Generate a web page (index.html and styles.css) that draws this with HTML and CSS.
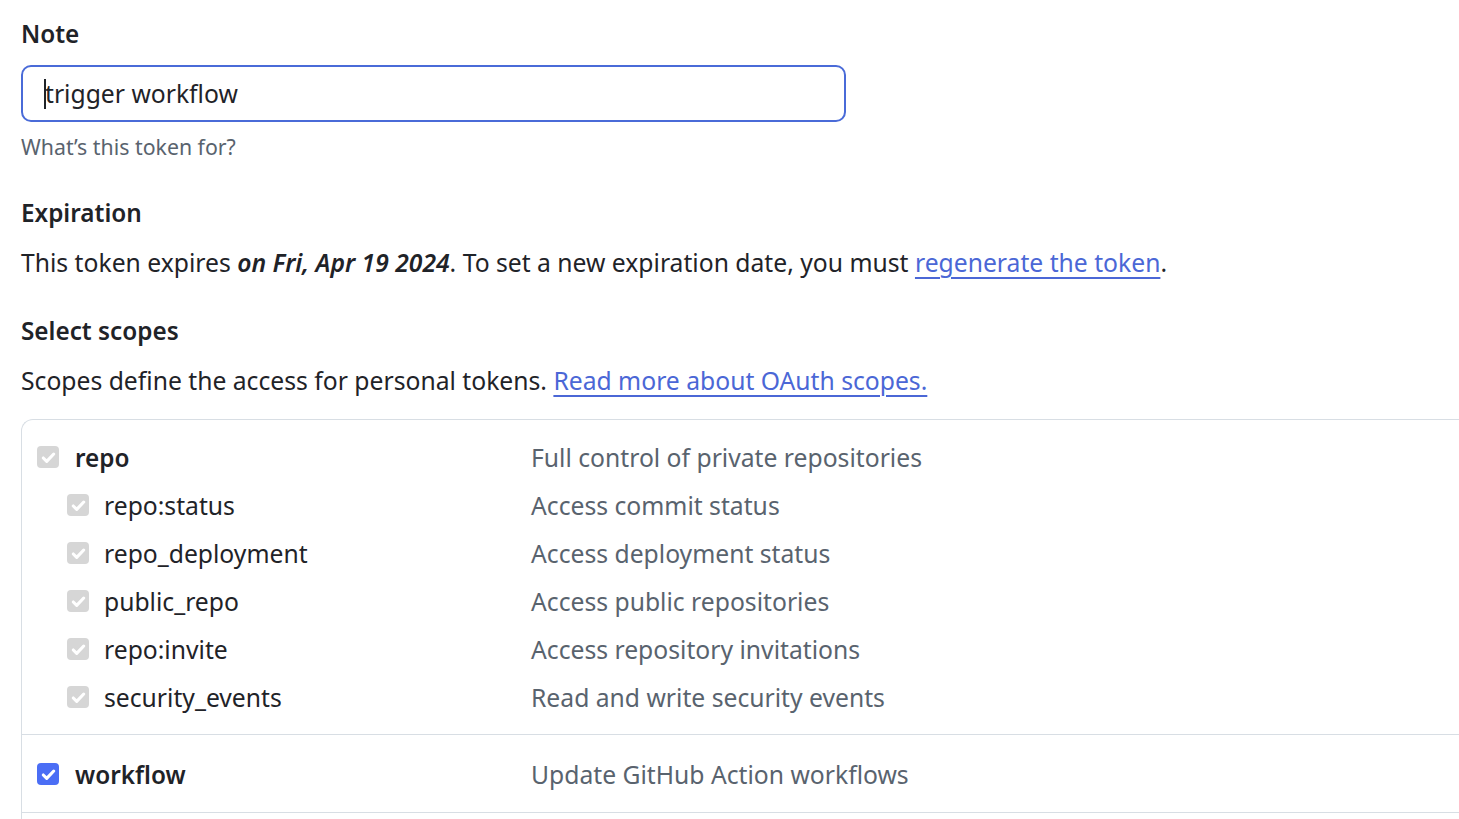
FILE: index.html
```html
<!DOCTYPE html>
<html lang="en">
<head>
<meta charset="utf-8">
<title>New personal access token</title>
<link rel="stylesheet" href="styles.css">
</head>
<body>
<main class="page">
  <label class="label" for="note">Note</label>
  <div class="input-wrap">
    <input class="input" id="note" type="text" value="trigger workflow">
    <span class="caret"></span>
  </div>
  <p class="hint">What’s this token for?</p>

  <h3 class="heading">Expiration</h3>
  <p class="text">This token expires <em class="date">on Fri, Apr 19 2024</em>. To set a new expiration date, you must <a class="link" href="#">regenerate the token</a>.</p>

  <h3 class="heading heading-scopes">Select scopes</h3>
  <p class="text">Scopes define the access for personal tokens. <a class="link" href="#">Read more about OAuth scopes.</a></p>

  <div class="scopes">
    <div class="group">
      <div class="row">
        <div class="name"><span class="cb cb-disabled"><svg viewBox="0 0 16 16"><path d="M3.6 8.4l2.9 2.9 5.9-6.2"/></svg></span><strong class="scope-main">repo</strong></div>
        <div class="desc">Full control of private repositories</div>
      </div>
      <div class="row sub">
        <div class="name"><span class="cb cb-disabled"><svg viewBox="0 0 16 16"><path d="M3.6 8.4l2.9 2.9 5.9-6.2"/></svg></span><span class="scope-sub">repo:status</span></div>
        <div class="desc">Access commit status</div>
      </div>
      <div class="row sub">
        <div class="name"><span class="cb cb-disabled"><svg viewBox="0 0 16 16"><path d="M3.6 8.4l2.9 2.9 5.9-6.2"/></svg></span><span class="scope-sub">repo_deployment</span></div>
        <div class="desc">Access deployment status</div>
      </div>
      <div class="row sub">
        <div class="name"><span class="cb cb-disabled"><svg viewBox="0 0 16 16"><path d="M3.6 8.4l2.9 2.9 5.9-6.2"/></svg></span><span class="scope-sub">public_repo</span></div>
        <div class="desc">Access public repositories</div>
      </div>
      <div class="row sub">
        <div class="name"><span class="cb cb-disabled"><svg viewBox="0 0 16 16"><path d="M3.6 8.4l2.9 2.9 5.9-6.2"/></svg></span><span class="scope-sub">repo:invite</span></div>
        <div class="desc">Access repository invitations</div>
      </div>
      <div class="row sub">
        <div class="name"><span class="cb cb-disabled"><svg viewBox="0 0 16 16"><path d="M3.6 8.4l2.9 2.9 5.9-6.2"/></svg></span><span class="scope-sub">security_events</span></div>
        <div class="desc">Read and write security events</div>
      </div>
    </div>
    <div class="group group-single">
      <div class="row">
        <div class="name"><span class="cb cb-checked"><svg viewBox="0 0 16 16"><path d="M3.6 8.4l2.9 2.9 5.9-6.2"/></svg></span><strong class="scope-main">workflow</strong></div>
        <div class="desc">Update GitHub Action workflows</div>
      </div>
    </div>
    <div class="group"></div>
  </div>
</main>
</body>
</html>
```

FILE: styles.css
```css
html, body {
  margin: 0;
  padding: 0;
  background: #ffffff;
  overflow: hidden;
}

body {
  font-family: "Noto Sans", "Open Sans", "Liberation Sans", sans-serif;
  color: #1f2328;
  font-size: 24.7px;
}

.page {
  padding: 16px 0 0 21px;
}

.label {
  display: block;
  font-weight: 600;
  font-size: 24.3px;
  line-height: 36px;
}

.input-wrap {
  position: relative;
  margin-top: 13px;
  width: 825px;
}

.input {
  box-sizing: border-box;
  width: 825px;
  height: 57px;
  border: 2.5px solid #4a6bd8;
  border-radius: 10px;
  padding: 0 0 0 22px;
  font-family: inherit;
  font-size: 24.7px;
  color: #1f2328;
  outline: none;
  background: #fff;
}

.caret {
  position: absolute;
  left: 23px;
  top: 14px;
  width: 2px;
  height: 30px;
  background: #1f2328;
}

.hint {
  margin: 10px 0 0;
  font-size: 21.3px;
  line-height: 30px;
  color: #59636e;
}

.heading {
  margin: 33px 0 0;
  font-size: 24.3px;
  font-weight: 600;
  line-height: 36px;
}

.heading-scopes {
  margin-top: 32px;
}

.text {
  margin: 14px 0 0;
  line-height: 36px;
}

.date {
  font-weight: 600;
}

.link {
  color: #4b67d6;
  text-decoration: underline;
  text-underline-offset: 5px;
  text-decoration-thickness: 2px;
}

.scopes {
  margin-top: 20px;
  margin-right: -40px;
  border: 1px solid #d8dee4;
  border-right: 0;
  border-radius: 12px 0 0 0;
}

.group {
  padding: 13px 0 13px;
  border-bottom: 1px solid #d8dee4;
}

.group-single {
  padding: 15px 0 14px;
}

.group:last-child {
  border-bottom: 0;
  height: 40px;
  padding: 0;
}

.row {
  display: grid;
  grid-template-columns: 494px 1fr;
  align-items: center;
  height: 48px;
  padding-left: 15px;
}

.name {
  display: flex;
  align-items: center;
}

.sub .name {
  padding-left: 30px;
}

.cb {
  display: inline-flex;
  align-items: center;
  justify-content: center;
  flex: none;
  width: 22px;
  height: 22px;
  border-radius: 4px;
  box-sizing: border-box;
}

.cb svg {
  width: 19px;
  height: 19px;
  fill: none;
  stroke: #ffffff;
  stroke-width: 2.6;
  stroke-linecap: round;
  stroke-linejoin: round;
}

.cb-disabled {
  background: #d6d6d6;
}

.cb-checked {
  background: #4b6ef5;
}

.scope-main {
  margin-left: 16px;
  font-weight: 600;
  font-size: 24.3px;
}

.scope-sub {
  margin-left: 15px;
}

.desc {
  color: #59636e;
}
```
